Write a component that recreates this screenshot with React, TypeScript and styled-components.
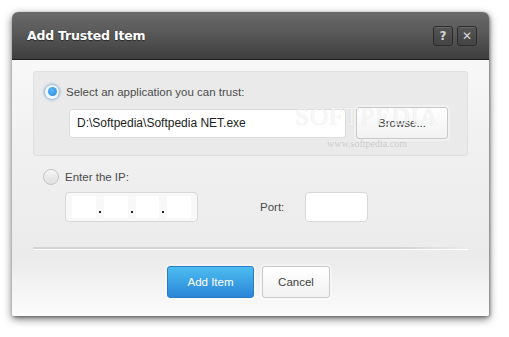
import React, { useState } from 'react';
import styled, { createGlobalStyle } from 'styled-components';

const GlobalStyle = createGlobalStyle`
  html, body {
    margin: 0;
    background: #ffffff;
  }
  body {
    font-family: "Liberation Sans", Arial, sans-serif;
  }
`;

const Page = styled.div`
  padding: 12px 0 0 12px;
  width: 509px;
  height: 337px;
  box-sizing: border-box;
`;

const Dialog = styled.div`
  position: relative;
  width: 477px;
  height: 304px;
  display: flex;
  flex-direction: column;
  border-radius: 6px 6px 2px 2px;
  box-shadow: 0 3px 8px rgba(0, 0, 0, 0.55), 1px 1px 3px rgba(0, 0, 0, 0.35);
  overflow: hidden;
`;

const TitleBar = styled.div`
  height: 47px;
  display: flex;
  align-items: center;
  padding: 0 12px 0 15px;
  background: linear-gradient(#696a69, #575857 45%, #3d3e3d);
  border-bottom: 1px solid #1e1e1e;
  flex-shrink: 0;
`;

const Title = styled.h1`
  flex: 1;
  margin: 0;
  font-family: "DejaVu Sans", Verdana, sans-serif;
  font-size: 12.5px;
  font-weight: bold;
  color: #ffffff;
  letter-spacing: -0.2px;
  text-shadow: 0 1px 1px rgba(0, 0, 0, 0.5);
`;

const TitleButtons = styled.div`
  display: flex;
  gap: 4px;
`;

const TitleButton = styled.button`
  width: 20px;
  height: 20px;
  padding: 0;
  display: flex;
  align-items: center;
  justify-content: center;
  border: 1px solid #2c2c2c;
  border-radius: 3px;
  background: linear-gradient(#545454, #444444);
  box-shadow: inset 0 1px 0 rgba(255, 255, 255, 0.12);
  color: #d6d6d6;
  font-family: "DejaVu Sans", Verdana, sans-serif;
  font-size: 12px;
  font-weight: bold;
`;

const Body = styled.div`
  flex: 1;
  display: flex;
  flex-direction: column;
  padding: 11px 21px 0 21px;
  background: linear-gradient(#f8f8f8 0%, #f0f0f0 35%, #ebebeb 78%, #fcfcfc 100%);
`;

const Panel = styled.div<{ $active?: boolean }>`
  height: 85px;
  box-sizing: border-box;
  padding: 10px 0 0 10px;
  border-radius: 3px;
  background: ${(p) => (p.$active ? '#eaeaea' : 'transparent')};
  border: 1px solid ${(p) => (p.$active ? '#e0e0e0' : 'transparent')};
`;

const OptionRow = styled.label`
  display: flex;
  align-items: center;
  gap: 6px;
  height: 19px;
  font-size: 11.5px;
  color: #4a4a4a;
  cursor: pointer;
`;

const Radio = styled.span<{ $checked?: boolean }>`
  width: 16px;
  height: 16px;
  border-radius: 50%;
  box-sizing: border-box;
  display: flex;
  align-items: center;
  justify-content: center;
  border: 1px solid ${(p) => (p.$checked ? '#a9c3d6' : '#c4c4c4')};
  background: ${(p) =>
    p.$checked
      ? 'radial-gradient(circle, #f4f8fb 55%, #dfe8ef 100%)'
      : 'linear-gradient(#f6f6f6, #dedede)'};
  box-shadow: ${(p) => (p.$checked ? '0 0 2px 1px rgba(150, 185, 215, 0.6)' : 'none')};

  &::after {
    content: '';
    display: ${(p) => (p.$checked ? 'block' : 'none')};
    width: 9px;
    height: 9px;
    border-radius: 50%;
    background: radial-gradient(circle at 40% 35%, #5fb8f2, #1f8ae0);
  }
`;

const FieldRow = styled.div<{ $indent: number }>`
  display: flex;
  align-items: center;
  gap: 10px;
  margin: 6px 0 0 ${(p) => p.$indent}px;
`;

const PathInput = styled.div`
  width: 277px;
  height: 29px;
  flex-shrink: 0;
  box-sizing: border-box;
  display: flex;
  align-items: center;
  padding-left: 7px;
  background: #ffffff;
  border: 1px solid #dcdcdc;
  border-radius: 3px;
  font-size: 12px;
  color: #222222;
`;

const Button = styled.button<{ $width: number; $primary?: boolean }>`
  width: ${(p) => p.$width}px;
  height: 32px;
  flex-shrink: 0;
  box-sizing: border-box;
  border-radius: 3px;
  font-family: "Liberation Sans", Arial, sans-serif;
  font-size: 11.5px;
  color: ${(p) => (p.$primary ? '#ffffff' : '#404040')};
  border: 1px solid ${(p) => (p.$primary ? '#2a7cc7' : '#c9c9c9')};
  background: ${(p) =>
    p.$primary ? 'linear-gradient(#4cbcef, #2b86d9)' : 'linear-gradient(#ffffff, #f2f2f2)'};
  box-shadow: 0 0 0 2px rgba(255, 255, 255, 0.35);
`;

const SecondOption = styled.div`
  padding: 11px 0 0 10px;
`;

const IpBox = styled.div`
  width: 133px;
  height: 30px;
  box-sizing: border-box;
  display: flex;
  align-items: center;
  gap: 3px;
  padding: 0 6px;
  background: #f8f8f8;
  border: 1px solid #d8d8d8;
  border-radius: 4px;
`;

const IpSegment = styled.span`
  width: 24px;
  height: 22px;
  background: #ffffff;
`;

const IpDot = styled.span`
  width: 2px;
  height: 2px;
  margin-top: 9px;
  background: #222222;
`;

const PortLabel = styled.span`
  margin-left: 52px;
  font-size: 11.5px;
  color: #4a4a4a;
`;

const PortInput = styled.div`
  width: 63px;
  height: 30px;
  box-sizing: border-box;
  margin-left: 11px;
  background: #ffffff;
  border: 1px solid #d8d8d8;
  border-radius: 4px;
`;

const Separator = styled.div`
  height: 2px;
  margin: 25px 0 0 0;
  background: linear-gradient(90deg, #d4d4d4 0%, #d4d4d4 85%, rgba(212, 212, 212, 0) 100%);
  border-bottom: 1px solid #ffffff;
`;

const Footer = styled.div`
  display: flex;
  justify-content: center;
  gap: 8px;
  margin-top: 16px;
  padding-right: 4px;
`;

const Watermark = styled.div`
  position: absolute;
  left: 290px;
  top: 90px;
  width: 130px;
  display: flex;
  flex-direction: column;
  align-items: center;
  pointer-events: none;
`;

const WatermarkBig = styled.span`
  font-family: "Liberation Serif", serif;
  font-size: 25px;
  line-height: 29px;
  letter-spacing: 1px;
  color: rgba(255, 255, 255, 0.8);
  text-shadow: 0 0 1px rgba(0, 0, 0, 0.15);
`;

const WatermarkSmall = styled.span`
  font-family: "Liberation Serif", serif;
  font-size: 10px;
  margin-top: 7px;
  color: #c6c6c6;
  text-shadow: 0 0 1px #ffffff;
`;

export default function App(): React.ReactElement {
  const [mode, setMode] = useState<'app' | 'ip'>('app');

  return (
    <Page>
      <GlobalStyle />
      <Dialog>
        <TitleBar>
          <Title>Add Trusted Item</Title>
          <TitleButtons>
            <TitleButton>?</TitleButton>
            <TitleButton>✕</TitleButton>
          </TitleButtons>
        </TitleBar>
        <Body>
          <Panel $active>
            <OptionRow onClick={() => setMode('app')}>
              <Radio $checked={mode === 'app'} />
              Select an application you can trust:
            </OptionRow>
            <FieldRow $indent={25}>
              <PathInput>D:\Softpedia\Softpedia NET.exe</PathInput>
              <Button $width={92}>Browse...</Button>
            </FieldRow>
          </Panel>
          <SecondOption>
            <OptionRow onClick={() => setMode('ip')}>
              <Radio $checked={mode === 'ip'} />
              Enter the IP:
            </OptionRow>
            <FieldRow $indent={22}>
              <IpBox>
                <IpSegment />
                <IpDot />
                <IpSegment />
                <IpDot />
                <IpSegment />
                <IpDot />
                <IpSegment />
              </IpBox>
              <PortLabel>Port:</PortLabel>
              <PortInput />
            </FieldRow>
          </SecondOption>
          <Separator />
          <Footer>
            <Button $width={87} $primary>Add Item</Button>
            <Button $width={68}>Cancel</Button>
          </Footer>
        </Body>
        <Watermark>
          <WatermarkBig>SOFTPEDIA</WatermarkBig>
          <WatermarkSmall>www.softpedia.com</WatermarkSmall>
        </Watermark>
      </Dialog>
    </Page>
  );
}
